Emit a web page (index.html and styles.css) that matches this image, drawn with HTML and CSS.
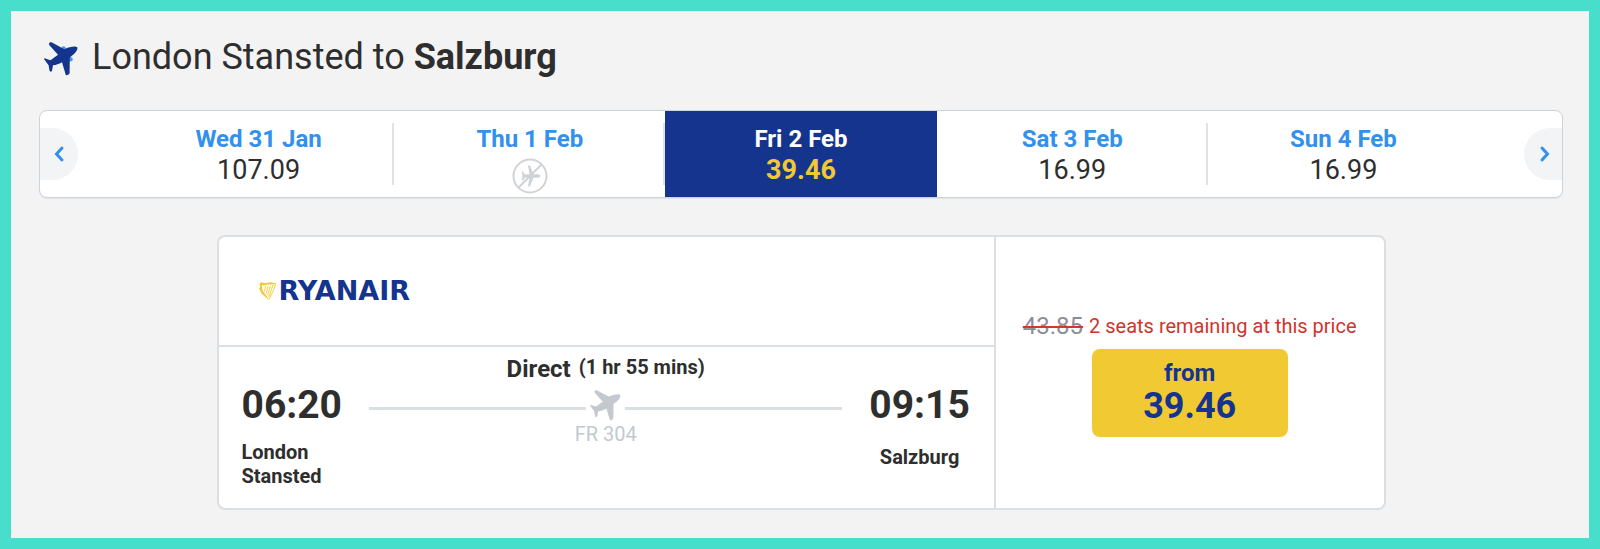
FILE: index.html
```html
<!DOCTYPE html>
<html lang="en">
<head>
<meta charset="utf-8">
<meta name="viewport" content="width=device-width, initial-scale=1">
<title>London Stansted to Salzburg</title>
<link rel="stylesheet" href="styles.css">
</head>
<body>
<svg class="defs" aria-hidden="true">
  <symbol id="plane" viewBox="0 0 34 34">
    <path d="M5 1.500C5.500 .5 6.800 0 8 .6L20.300 7.200C24 5.500 28 4.500 31 4.600C34 4.800 34 6.500 32.500 9C31 11.500 28 13.500 25.800 15.500L25.600 31C25 32.600 23 33.800 21.800 33L18 20.200C15 22 12 23 9 23.200L8 29C7.200 29.800 6 29.600 5.600 29L4.600 23.200L0 17C0 16.400 .8 16.200 1.300 16.400L6.500 18.200L14 12.800L5.200 3Z" fill="currentColor"/>
  </symbol>
</svg>
<main class="page">
  <header class="route">
    <svg class="route-icon" viewBox="0 0 34 34" aria-hidden="true">
      <circle cx="19.500" cy="6.500" r="2.200" fill="#3b9cf0"/>
      <circle cx="26.500" cy="17.200" r="2.200" fill="#3b9cf0"/>
      <use href="#plane"/>
    </svg>
    <h1 class="route-title">London Stansted to <strong>Salzburg</strong></h1>
  </header>

  <nav class="dates" aria-label="Choose a date">
    <div class="step">
      <button class="step-button step-prev" type="button" aria-label="Earlier dates">
        <svg width="12" height="18" viewBox="0 0 12 18" aria-hidden="true"><path d="M9 3L3.500 9L9 15" class="chevron"/></svg>
      </button>
    </div>
    <button class="date" type="button"><span class="day">Wed 31 Jan</span><span class="fare">107.09</span></button>
    <button class="date" type="button"><span class="day">Thu 1 Feb</span>
      <svg class="no-flight" viewBox="0 0 36 36" role="img" aria-label="No flights">
        <circle cx="18" cy="18" r="16.500" fill="none" stroke="currentColor" stroke-width="2"/>
        <path d="M6.500 29.500L29.500 6.500" stroke="currentColor" stroke-width="2"/>
        <path d="M28.500 18C28.500 16.800 26.500 16.200 25 16.200H21.500L18 7.500H16L17.500 16.200 13 16.600 11 13.500H9.800L10.600 18 9.800 22.500H11L13 19.400 17.500 19.800 16 28.500H18L21.500 19.800H25C26.500 19.800 28.500 19.200 28.500 18Z" fill="currentColor"/>
      </svg>
    </button>
    <button class="date selected" type="button" aria-current="date"><span class="day">Fri 2 Feb</span><span class="fare">39.46</span></button>
    <button class="date" type="button"><span class="day">Sat 3 Feb</span><span class="fare">16.99</span></button>
    <button class="date last" type="button"><span class="day">Sun 4 Feb</span><span class="fare">16.99</span></button>
    <div class="step step-end">
      <button class="step-button step-next" type="button" aria-label="Later dates">
        <svg width="12" height="18" viewBox="0 0 12 18" aria-hidden="true"><path d="M3 3L8.500 9L3 15" class="chevron"/></svg>
      </button>
    </div>
  </nav>

  <article class="flight">
    <section class="details">
      <div class="airline">
        <svg class="harp" viewBox="0 0 18 20" aria-hidden="true">
          <path d="M.5 3.500C1 1 3 .8 4.500 1.800 7 3 9 .8 12 1.200 14 1.500 15.500 2.400 17.500 1.800 16 4 12 3.400 9 3.600 6.500 4.200 5 5 3 3.800L3.200 8C4 12 8.500 14 10 19.500 7.500 15.500 2 14 1.200 9.500L0 7.500 1.300 6Z" fill="#f1c933"/>
          <path d="M16.500 3C15.500 9 12.500 12 10.200 18.500M6.500 5L5.500 10.500M9 5L7.300 12.500M11.500 4.500L8.700 14.500M14 4L9.800 16" fill="none" stroke="#f1c933" stroke-width=".9"/>
        </svg>
        <span class="airline-name">RYANAIR</span>
      </div>
      <div class="journey">
        <div class="stop">
          <time class="clock">06:20</time>
          <span class="place">London<br>Stansted</span>
        </div>
        <div class="leg">
          <div class="summary"><span class="direct">Direct</span><span class="duration">(1 hr 55 mins)</span></div>
          <div class="track"><svg class="track-icon" viewBox="0 0 34 34" aria-hidden="true"><use href="#plane"/></svg></div>
          <span class="number">FR 304</span>
        </div>
        <div class="stop arrival">
          <time class="clock">09:15</time>
          <span class="place">Salzburg</span>
        </div>
      </div>
    </section>
    <section class="price">
      <p class="offer"><del class="old">43.85</del><span class="seats">2 seats remaining at this price</span></p>
      <button class="select" type="button"><span class="from">from</span><span class="amount">39.46</span></button>
    </section>
  </article>
</main>
</body>
</html>
```

FILE: styles.css
```css
* { box-sizing: border-box; }

body {
  margin: 0;
  font-family: Roboto, "Liberation Sans", sans-serif;
  font-size: 20px;
  line-height: 24px;
  color: #2e2e2e;
}

button {
  font: inherit;
  color: inherit;
  border: 0;
  padding: 0;
  background: none;
  cursor: pointer;
}

.defs { position: absolute; width: 0; height: 0; }

.page {
  min-height: 100vh;
  padding: 24px 26px 24px 28px;
  border: 11px solid #47dfcc;
  background: #f3f3f3;
}

.route {
  display: flex;
  align-items: center;
  gap: 14px;
  padding-left: 5px;
}

.route-icon { width: 34px; height: 34px; margin-top: 4px; color: #14348e; }

.route-title {
  margin: 0;
  font-size: 36px;
  line-height: 44px;
  font-weight: 400;
}

.route-title strong { font-weight: 700; }

.dates {
  display: flex;
  margin-top: 31px;
  border: 1px solid #cdd4d9;
  border-radius: 8px;
  box-shadow: 0 1px 1px #dfe4e8;
  background: #fff;
  overflow: hidden;
}

.step { flex: 0 0 83px; display: flex; align-items: center; }
.step-end { justify-content: flex-end; }

.step-button {
  display: flex;
  align-items: center;
  justify-content: center;
  width: 38px;
  height: 52px;
  background: #f3f4f6;
}

.step-prev { border-radius: 0 26px 26px 0; }
.step-next { border-radius: 26px 0 0 26px; padding-left: 4px; }

.chevron { fill: none; stroke: #3290ee; stroke-width: 3; stroke-linecap: round; }

.date {
  flex: 1 1 0;
  display: flex;
  flex-direction: column;
  align-items: center;
  padding: 14px 0 10px;
  background: linear-gradient(#dfe3e6, #dfe3e6) right center / 2px 62px no-repeat;
}

.last { background: none; }

.day { font-size: 24px; line-height: 28px; font-weight: 700; color: #3290ee; }
.fare { font-size: 27px; line-height: 34px; }

.selected { background: #14348e; }
.selected .day { color: #fff; }
.selected .fare { font-weight: 700; color: #f1c933; }

.no-flight { width: 36px; height: 36px; margin-top: 5px; margin-bottom: -7px; color: #d0d3d6; }

.flight {
  display: flex;
  max-width: 1169px;
  margin: 37px auto 0;
  border: 2px solid #d9dfe3;
  border-radius: 8px;
  background: #fff;
}

.details { flex: 2 1 0; border-right: 2px solid #d9dfe3; }

.airline {
  display: flex;
  align-items: center;
  gap: 2px;
  height: 110px;
  padding-left: 40px;
  border-bottom: 2px solid #d9dfe3;
}

.harp { width: 18px; height: 20px; }

.airline-name {
  font-family: "DejaVu Sans", sans-serif;
  font-size: 27px;
  line-height: 28px;
  font-weight: 700;
  color: #14348e;
}

.journey {
  display: flex;
  gap: 27px;
  padding: 0 24px 20px 23px;
}

.stop { display: flex; flex-direction: column; padding-top: 34px; }
.clock { font-size: 39px; line-height: 48px; font-weight: 700; }
.place { margin-top: 11px; font-weight: 700; }
.arrival { align-items: center; }
.arrival .place { margin-top: 16px; }

.leg { flex: 1; display: flex; flex-direction: column; padding-top: 8px; }
.summary { display: flex; justify-content: center; gap: 8px; font-weight: 700; }
.direct { font-size: 24px; line-height: 28px; }

.track {
  display: flex;
  align-items: center;
  gap: 4px;
  height: 34px;
  margin-top: 8px;
  color: #c3c9ce;
}

.track::before,
.track::after { content: ""; flex: 1; height: 3px; background: #d9dfe3; }
.track-icon { width: 31px; height: 31px; margin-bottom: 6px; }

.number { text-align: center; line-height: 18px; color: #c3c9ce; }

.price {
  flex: 1 1 0;
  display: flex;
  flex-direction: column;
  align-items: center;
  justify-content: center;
  gap: 9px;
  padding-top: 3px;
}

.offer { display: flex; align-items: center; gap: 6px; margin: 0; white-space: nowrap; }

.old {
  font-size: 24px;
  line-height: 28px;
  color: #8a8f94;
  text-decoration: line-through 2px #d0392b;
}

.seats { color: #d0342c; }

.select {
  display: flex;
  flex-direction: column;
  align-items: center;
  width: 196px;
  padding: 10px 0 12px;
  border-radius: 8px;
  background: #f1c933;
  color: #14348e;
  font-weight: 700;
}

.from { font-size: 24px; line-height: 28px; }
.amount { font-size: 36px; line-height: 38px; }
```
